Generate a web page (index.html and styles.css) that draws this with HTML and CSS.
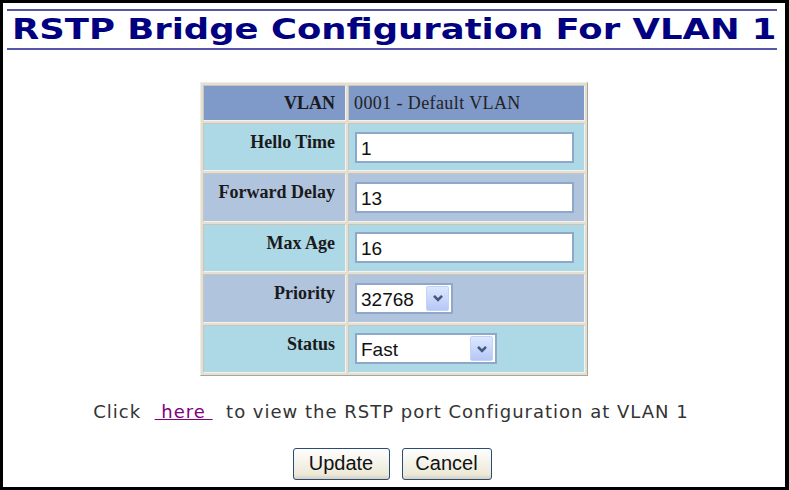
FILE: index.html
```html
<!DOCTYPE html>
<html>
<head>
<meta charset="utf-8">
<link rel="stylesheet" href="styles.css">
</head>
<body>
<div class="page">
  <h1 class="title"><span class="title-text">RSTP Bridge Configuration For VLAN 1</span></h1>
  <table class="cfg">
    <tr class="hdr">
      <td class="lbl mid">VLAN</td>
      <td class="val">0001 - Default VLAN</td>
    </tr>
    <tr class="light">
      <td class="lbl">Hello Time</td>
      <td class="val"><div class="inp">1</div></td>
    </tr>
    <tr class="steel">
      <td class="lbl">Forward Delay</td>
      <td class="val"><div class="inp">13</div></td>
    </tr>
    <tr class="light">
      <td class="lbl">Max Age</td>
      <td class="val"><div class="inp">16</div></td>
    </tr>
    <tr class="steel">
      <td class="lbl">Priority</td>
      <td class="val"><div class="sel sel-pri"><span class="sel-text">32768</span><span class="drop"><svg width="12" height="8" viewBox="0 0 12 8"><path d="M2 1.8 L6 5.8 L10 1.8" fill="none" stroke="#44587c" stroke-width="2.6"/></svg></span></div></td>
    </tr>
    <tr class="light">
      <td class="lbl">Status</td>
      <td class="val"><div class="sel sel-stat"><span class="sel-text">Fast</span><span class="drop"><svg width="12" height="8" viewBox="0 0 12 8"><path d="M2 1.8 L6 5.8 L10 1.8" fill="none" stroke="#44587c" stroke-width="2.6"/></svg></span></div></td>
    </tr>
  </table>
  <p class="note">Click &nbsp;<a class="link" href="#">&nbsp;here&nbsp;</a>&nbsp; to view the RSTP port Configuration at VLAN 1</p>
  <div class="buttons">
    <button class="btn btn-update">Update</button>
    <button class="btn btn-cancel">Cancel</button>
  </div>
</div>
</body>
</html>
```

FILE: styles.css
```css
html {
  background: #000;
  margin: 0;
  padding: 0;
}
body {
  margin: 3px 4px 3px 3px;
  padding: 0;
  background: #fff;
  height: 484px;
  overflow: hidden;
}
.page {
  display: flex;
  flex-direction: column;
  align-items: center;
}
.title {
  align-self: stretch;
  margin: 6px 8px 0 4px;
  border-top: 2px solid #5656a8;
  border-bottom: 2px solid #5656a8;
  font-family: "DejaVu Sans", Verdana, sans-serif;
  font-weight: bold;
  font-size: 28px;
  line-height: 37px;
  height: 37px;
  color: #000080;
  padding-left: 5px;
  white-space: nowrap;
  overflow: hidden;
}
.title-text {
  display: inline-block;
  transform: scaleX(1.265);
  transform-origin: left center;
}
.cfg {
  margin-top: 32px;
  border-collapse: separate;
  border-spacing: 2px;
  background: #e3dfd4;
  border: 1px solid;
  border-color: #f0ede4 #a8a498 #a8a498 #f0ede4;
  font-family: "Liberation Serif", "Times New Roman", serif;
  font-size: 18px;
  color: #1a1a1a;
}
.cfg td {
  border: 1px solid;
  border-color: #c9c5b8 #f4f2ea #f4f2ea #c9c5b8;
  padding: 0;
}
.lbl {
  width: 131px;
  text-align: right;
  vertical-align: top;
  font-weight: bold;
  line-height: 20px;
  padding: 8px 10px 0 0 !important;
}
.lbl.mid {
  vertical-align: middle;
  padding-top: 0 !important;
}
.val {
  width: 230px;
  vertical-align: middle;
  padding-left: 5px !important;
}
.hdr td { height: 34px; background: #7f99c9; }
.hdr .val { color: #222; letter-spacing: 0.4px; }
.light td { height: 46.4px; background: #add8e6; }
.steel td { height: 46.4px; background: #b0c4de; }
.steel .lbl, .light .lbl { height: 38.4px; }
.inp {
  width: 211px;
  height: 27px;
  border: 2px solid #8fa7c8;
  background: #fff;
  font-family: "Liberation Sans", Arial, sans-serif;
  font-size: 19px;
  line-height: 29px;
  padding-left: 4px;
  color: #111;
  box-sizing: content-box;
  margin-left: 1px;
}
.sel {
  display: flex;
  align-items: center;
  justify-content: space-between;
  height: 27px;
  border: 2px solid #8fa7c8;
  background: #fff;
  font-family: "Liberation Sans", Arial, sans-serif;
  font-size: 19px;
  color: #111;
  padding-left: 4px;
  padding-right: 2px;
  margin-left: 1px;
}
.sel-text { padding-top: 3px; }
.sel-pri { width: 88px; }
.sel-stat { width: 132px; }
.drop {
  width: 21px;
  height: 23px;
  border: 1px solid #c3d3f8;
  border-radius: 2px;
  background: linear-gradient(#dde8fe, #b5c7f7);
  display: flex;
  align-items: center;
  justify-content: center;
}
.note {
  margin: 25px 0 0 0;
  font-family: "DejaVu Sans", Verdana, sans-serif;
  font-size: 18px;
  letter-spacing: 1px;
  color: #333;
  white-space: pre;
  padding-right: 6px;
}
.link {
  color: #800080;
  text-decoration: underline;
}
.buttons {
  margin-top: 26px;
  display: flex;
  gap: 12px;
  padding-right: 4px;
}
.btn {
  font-family: "Liberation Sans", Arial, sans-serif;
  font-size: 20px;
  color: #111;
  height: 32px;
  border: 1px solid #2a4a78;
  border-radius: 3px;
  background: linear-gradient(#fefefe, #ece9d8 85%, #d6d0c0);
  padding: 0;
}
.btn-update { width: 97px; }
.btn-cancel { width: 90px; }
```
